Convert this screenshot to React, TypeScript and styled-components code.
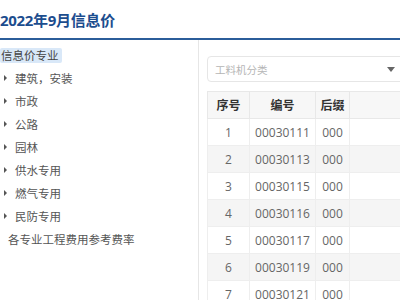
import React from "react";
import styled, { createGlobalStyle } from "styled-components";

const GlobalStyle = createGlobalStyle`
  html, body {
    margin: 0;
    padding: 0;
    background: #fff;
    overflow: hidden;
  }
  body {
    font-family: "Open Sans", "Noto Sans CJK SC", sans-serif;
    font-size: 12px;
    color: #555;
  }
`;

const Page = styled.div`
  width: 420px;
  height: 300px;
  display: flex;
  flex-direction: column;
`;

const TitleBar = styled.div`
  height: 38px;
  border-bottom: 2px solid #2b5d9a;
  display: flex;
  align-items: center;
`;

const Title = styled.h1`
  margin: 0;
  font-size: 15px;
  font-weight: 700;
  color: #1c4d8e;
  letter-spacing: -0.3px;
`;

const Body = styled.div`
  flex: 1;
  display: grid;
  grid-template-columns: 199px 1fr;
  min-height: 0;
`;

const Sidebar = styled.aside`
  border-right: 1px solid #e6e6e6;
  padding-top: 4px;
  font-size: 11.5px;
`;

const TreeRow = styled.div<{ $indent: number }>`
  height: 22.9px;
  display: flex;
  align-items: center;
  padding-left: ${(p) => p.$indent}px;
  gap: 8px;
  color: #555;
  white-space: nowrap;
`;

const RootLabel = styled.span`
  background: #d9e8f8;
  padding: 0 3px 0 1px;
  line-height: 15px;
  border-radius: 2px;
  color: #444;
`;

const Caret = styled.span`
  width: 0;
  height: 0;
  border-top: 3.5px solid transparent;
  border-bottom: 3.5px solid transparent;
  border-left: 3.5px solid #555;
`;

const Main = styled.main`
  padding: 16px 0 0 8px;
  display: flex;
  flex-direction: column;
  gap: 9px;
  width: 197px;
`;

const Select = styled.div`
  height: 24px;
  border: 1px solid #e6e6e6;
  border-radius: 4px;
  display: flex;
  align-items: center;
  justify-content: space-between;
  padding: 0 8px 0 7px;
  color: #b5b5b5;
  font-size: 10.5px;
`;

const Arrow = styled.span`
  width: 0;
  height: 0;
  border-left: 4px solid transparent;
  border-right: 4px solid transparent;
  border-top: 5px solid #666;
`;

const Table = styled.table`
  border-collapse: collapse;
  width: 260px;
  flex: none;
  table-layout: fixed;
  border-left: 1px solid #e8e8e8;
`;

const Th = styled.th<{ $w?: number }>`
  width: ${(p) => (p.$w ? `${p.$w}px` : "auto")};
  height: 26px;
  background: #f7f7f7;
  border: 1px solid #e8e8e8;
  font-weight: 700;
  color: #333;
  text-align: center;
  padding: 0;
`;

const Tr = styled.tr<{ $striped: boolean }>`
  background: ${(p) => (p.$striped ? "#f5f5f5" : "#fff")};
`;

const Td = styled.td`
  height: 26px;
  border: 1px solid #eeeeee;
  text-align: center;
  color: #666;
  padding: 0;
`;

const categories = ["建筑，安装", "市政", "公路", "园林", "供水专用", "燃气专用", "民防专用"];

const rows = [
  ["1", "00030111", "000"],
  ["2", "00030113", "000"],
  ["3", "00030115", "000"],
  ["4", "00030116", "000"],
  ["5", "00030117", "000"],
  ["6", "00030119", "000"],
  ["7", "00030121", "000"],
];

export default function App() {
  return (
    <>
      <GlobalStyle />
      <Page>
        <TitleBar>
          <Title>2022年9月信息价</Title>
        </TitleBar>
        <Body>
          <Sidebar>
            <TreeRow $indent={0}>
              <RootLabel>信息价专业</RootLabel>
            </TreeRow>
            {categories.map((c) => (
              <TreeRow key={c} $indent={4}>
                <Caret />
                {c}
              </TreeRow>
            ))}
            <TreeRow $indent={8}>各专业工程费用参考费率</TreeRow>
          </Sidebar>
          <Main>
            <Select>
              工料机分类
              <Arrow />
            </Select>
            <Table>
              <thead>
                <tr>
                  <Th $w={41}>序号</Th>
                  <Th $w={65}>编号</Th>
                  <Th $w={33}>后缀</Th>
                  <Th />
                </tr>
              </thead>
              <tbody>
                {rows.map((r, i) => (
                  <Tr key={r[0]} $striped={i % 2 === 1}>
                    {r.map((v, j) => (
                      <Td key={j}>{v}</Td>
                    ))}
                    <Td />
                  </Tr>
                ))}
              </tbody>
            </Table>
          </Main>
        </Body>
      </Page>
    </>
  );
}
